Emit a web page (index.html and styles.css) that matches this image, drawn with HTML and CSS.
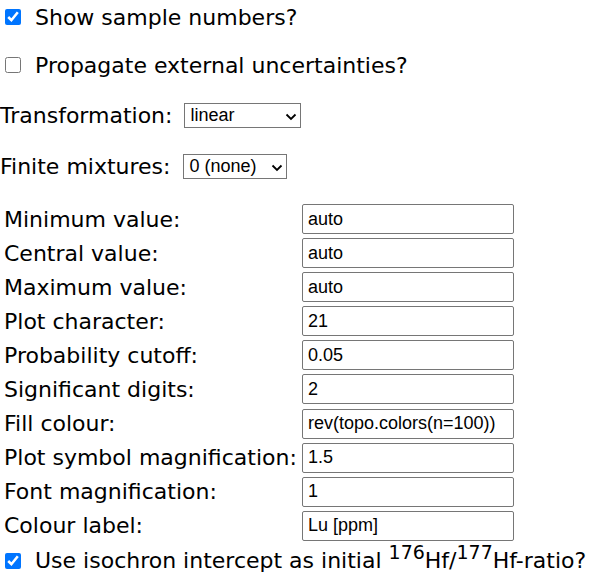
FILE: index.html
```html
<!DOCTYPE html>
<html>
<head>
<meta charset="utf-8">
<link rel="stylesheet" href="styles.css">
</head>
<body>
<div class="page">
  <label class="row row-first"><input type="checkbox" class="cb" checked><span>Show sample numbers?</span></label>
  <label class="row row-second"><input type="checkbox" class="cb"><span>Propagate external uncertainties?</span></label>
  <div class="row row-sel1"><span class="sel-label">Transformation:</span><span class="selwrap sel-trans"><select class="sel"><option>linear</option><option>log</option></select><svg class="chev" width="12" height="8" viewBox="0 0 12 8"><path d="M1.5 1.5 L6 6 L10.5 1.5" fill="none" stroke="#000" stroke-width="1.8"/></svg></span></div>
  <div class="row row-sel2"><span class="sel-label">Finite mixtures:</span><span class="selwrap sel-mix"><select class="sel"><option>0 (none)</option><option>auto</option></select><svg class="chev" width="12" height="8" viewBox="0 0 12 8"><path d="M1.5 1.5 L6 6 L10.5 1.5" fill="none" stroke="#000" stroke-width="1.8"/></svg></span></div>
  <div class="opts">
    <span class="lab">Minimum value:</span><input class="txt" type="text" value="auto">
    <span class="lab">Central value:</span><input class="txt" type="text" value="auto">
    <span class="lab">Maximum value:</span><input class="txt" type="text" value="auto">
    <span class="lab">Plot character:</span><input class="txt" type="text" value="21">
    <span class="lab">Probability cutoff:</span><input class="txt" type="text" value="0.05">
    <span class="lab">Significant digits:</span><input class="txt" type="text" value="2">
    <span class="lab">Fill colour:</span><input class="txt" type="text" value="rev(topo.colors(n=100))">
    <span class="lab">Plot symbol magnification:</span><input class="txt" type="text" value="1.5">
    <span class="lab">Font magnification:</span><input class="txt" type="text" value="1">
    <span class="lab">Colour label:</span><input class="txt" type="text" value="Lu [ppm]">
  </div>
  <label class="row row-last"><input type="checkbox" class="cb" checked><span>Use isochron intercept as initial <sup>176</sup>Hf/<sup>177</sup>Hf-ratio?</span></label>
</div>
</body>
</html>
```

FILE: styles.css
```css
html, body {
  margin: 0;
  padding: 0;
  background: #ffffff;
}
body {
  font-family: "DejaVu Sans", Verdana, sans-serif;
  font-size: 22px;
  color: #000000;
  width: 597px;
  height: 577px;
  overflow: hidden;
}
.page {
  display: flex;
  flex-direction: column;
}
.row {
  display: flex;
  align-items: center;
  height: 26px;
  white-space: nowrap;
}
.row-first { margin-top: 4px; }
.row-second { margin-top: 22px; }
.row-sel1 { margin-top: 24px; }
.row-sel2 { margin-top: 25px; }
.row-last { margin-top: 7px; }
.cb {
  width: 16px;
  height: 16px;
  margin: 0 14px 0 5px;
  accent-color: #0075ff;
}
.sel-label {
  margin-right: 12px;
}
.selwrap {
  position: relative;
  display: inline-flex;
}
.sel {
  -webkit-appearance: none;
  appearance: none;
  box-sizing: border-box;
  width: 100%;
  height: 25px;
  margin: 0;
  padding: 0 0 0 5px;
  font-family: "Liberation Sans", Arial, sans-serif;
  font-size: 18px;
  border: 1px solid #767676;
  border-radius: 0;
  background: #ffffff;
  color: #000000;
}
.chev {
  position: absolute;
  right: 4px;
  top: 10px;
  pointer-events: none;
}
.sel-trans { width: 117px; }
.sel-mix { width: 104px; margin-left: 1px; }
.opts {
  display: grid;
  grid-template-columns: 298px 212px;
  row-gap: 4.1px;
  margin-top: 25px;
  margin-left: 4px;
  align-items: center;
}
.lab {
  white-space: nowrap;
}
.txt {
  box-sizing: border-box;
  width: 212px;
  height: 30px;
  margin: 0;
  padding: 0 5px;
  border: 1px solid #767676;
  border-radius: 2px;
  font-family: "Liberation Sans", Arial, sans-serif;
  font-size: 18px;
  color: #000000;
}
sup {
  font-size: 19px;
  line-height: 0;
  vertical-align: 0.45em;
}
```
